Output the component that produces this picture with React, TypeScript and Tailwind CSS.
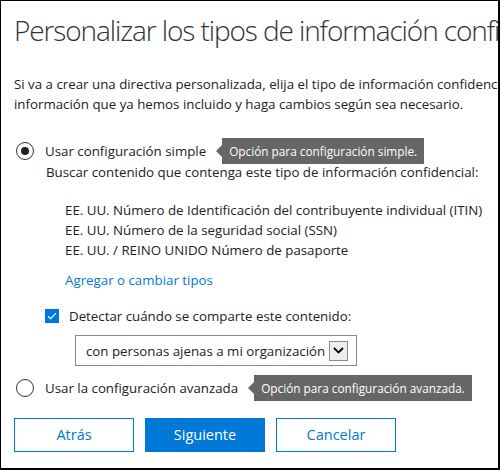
import React from "react";

const font = { fontFamily: '"Open Sans", "Noto Sans", sans-serif' };

function Tooltip({ text }: { text: string }) {
  return (
    <div className="flex items-center ml-[10px]">
      <div className="w-0 h-0 border-y-[6px] border-y-transparent border-r-[6px] border-r-[#666666]" />
      <div className="bg-[#666666] text-white text-[11.8px] leading-[26px] h-[26px] px-[7px] whitespace-nowrap">{text}</div>
    </div>
  );
}

function Radio({ checked }: { checked: boolean }) {
  return (
    <div className="w-[18px] h-[18px] rounded-full border-[1.5px] border-[#333] flex items-center justify-center shrink-0">
      {checked && <div className="w-[8px] h-[8px] rounded-full bg-[#222]" />}
    </div>
  );
}

export default function App() {
  return (
    <div
      className="w-[500px] h-[470px] overflow-hidden bg-white text-[#222] border-l border-t border-r-2 border-b-2 border-black relative"
      style={font}
    >
      <div className="pl-[13px] pt-[8px] text-[28px] tracking-[-1.1px] font-light leading-[42px] whitespace-nowrap text-[#333]">
        Personalizar los tipos de información confidencial
      </div>
      <div className="pl-[13px] pt-[23px] text-[13.3px] leading-[20px] whitespace-nowrap">
        <div>Si va a crear una directiva personalizada, elija el tipo de información confidencial</div>
        <div>información que ya hemos incluido y haga cambios según sea necesario.</div>
      </div>
      <div className="pl-[15px] pt-[26px] text-[13.3px] leading-[20px]">
        <div className="flex items-center h-[22px]">
          <Radio checked />
          <span className="ml-[11px]">Usar configuración simple</span>
          <Tooltip text="Opción para configuración simple." />
        </div>
        <div className="pl-[30px]">Buscar contenido que contenga este tipo de información confidencial:</div>
        <div className="pl-[49px] pt-[18px]">
          <div>EE. UU. Número de Identificación del contribuyente individual (ITIN)</div>
          <div>EE. UU. Número de la seguridad social (SSN)</div>
          <div>EE. UU. / REINO UNIDO Número de pasaporte</div>
          <div className="pt-[10px] text-[#0078d7]">Agregar o cambiar tipos</div>
        </div>
        <div className="pl-[29px] pt-[16px] flex items-center">
          <div className="w-[14px] h-[14px] bg-[#0078d7] flex items-center justify-center">
            <svg width="10" height="8" viewBox="0 0 10 8"><path d="M1 4.2 L3.6 6.6 L9 1.2" stroke="white" strokeWidth="1.2" fill="none" /></svg>
          </div>
          <span className="ml-[10px]">Detectar cuándo se comparte este contenido:</span>
        </div>
        <div className="pl-[59px] pt-[9px]">
          <div className="w-[282px] h-[31px] border border-[#8a8a8a] flex items-center justify-between pl-[10px] pr-[8px]">
            <span>con personas ajenas a mi organización</span>
            <div className="w-[19px] h-[20px] border border-[#8a8a8a] bg-[#eeeeee] flex items-center justify-center">
              <svg width="11" height="7" viewBox="0 0 11 7"><path d="M1 1 L5.5 5.5 L10 1" stroke="black" strokeWidth="1.8" fill="none" /></svg>
            </div>
          </div>
        </div>
        <div className="flex items-center h-[26px] mt-[9px]">
          <Radio checked={false} />
          <span className="ml-[11px]">Usar la configuración avanzada</span>
          <Tooltip text="Opción para configuración avanzada." />
        </div>
      </div>
      <div className="flex gap-[11px] pl-[13px] pt-[17px] text-[14.5px]">
        <button className="w-[120px] h-[34px] border border-[#0078d7] text-[#0078d7] bg-white">Atrás</button>
        <button className="w-[120px] h-[34px] bg-[#0078d7] text-white">Siguiente</button>
        <button className="w-[120px] h-[34px] border border-[#0078d7] text-[#0078d7] bg-white">Cancelar</button>
      </div>
    </div>
  );
}
